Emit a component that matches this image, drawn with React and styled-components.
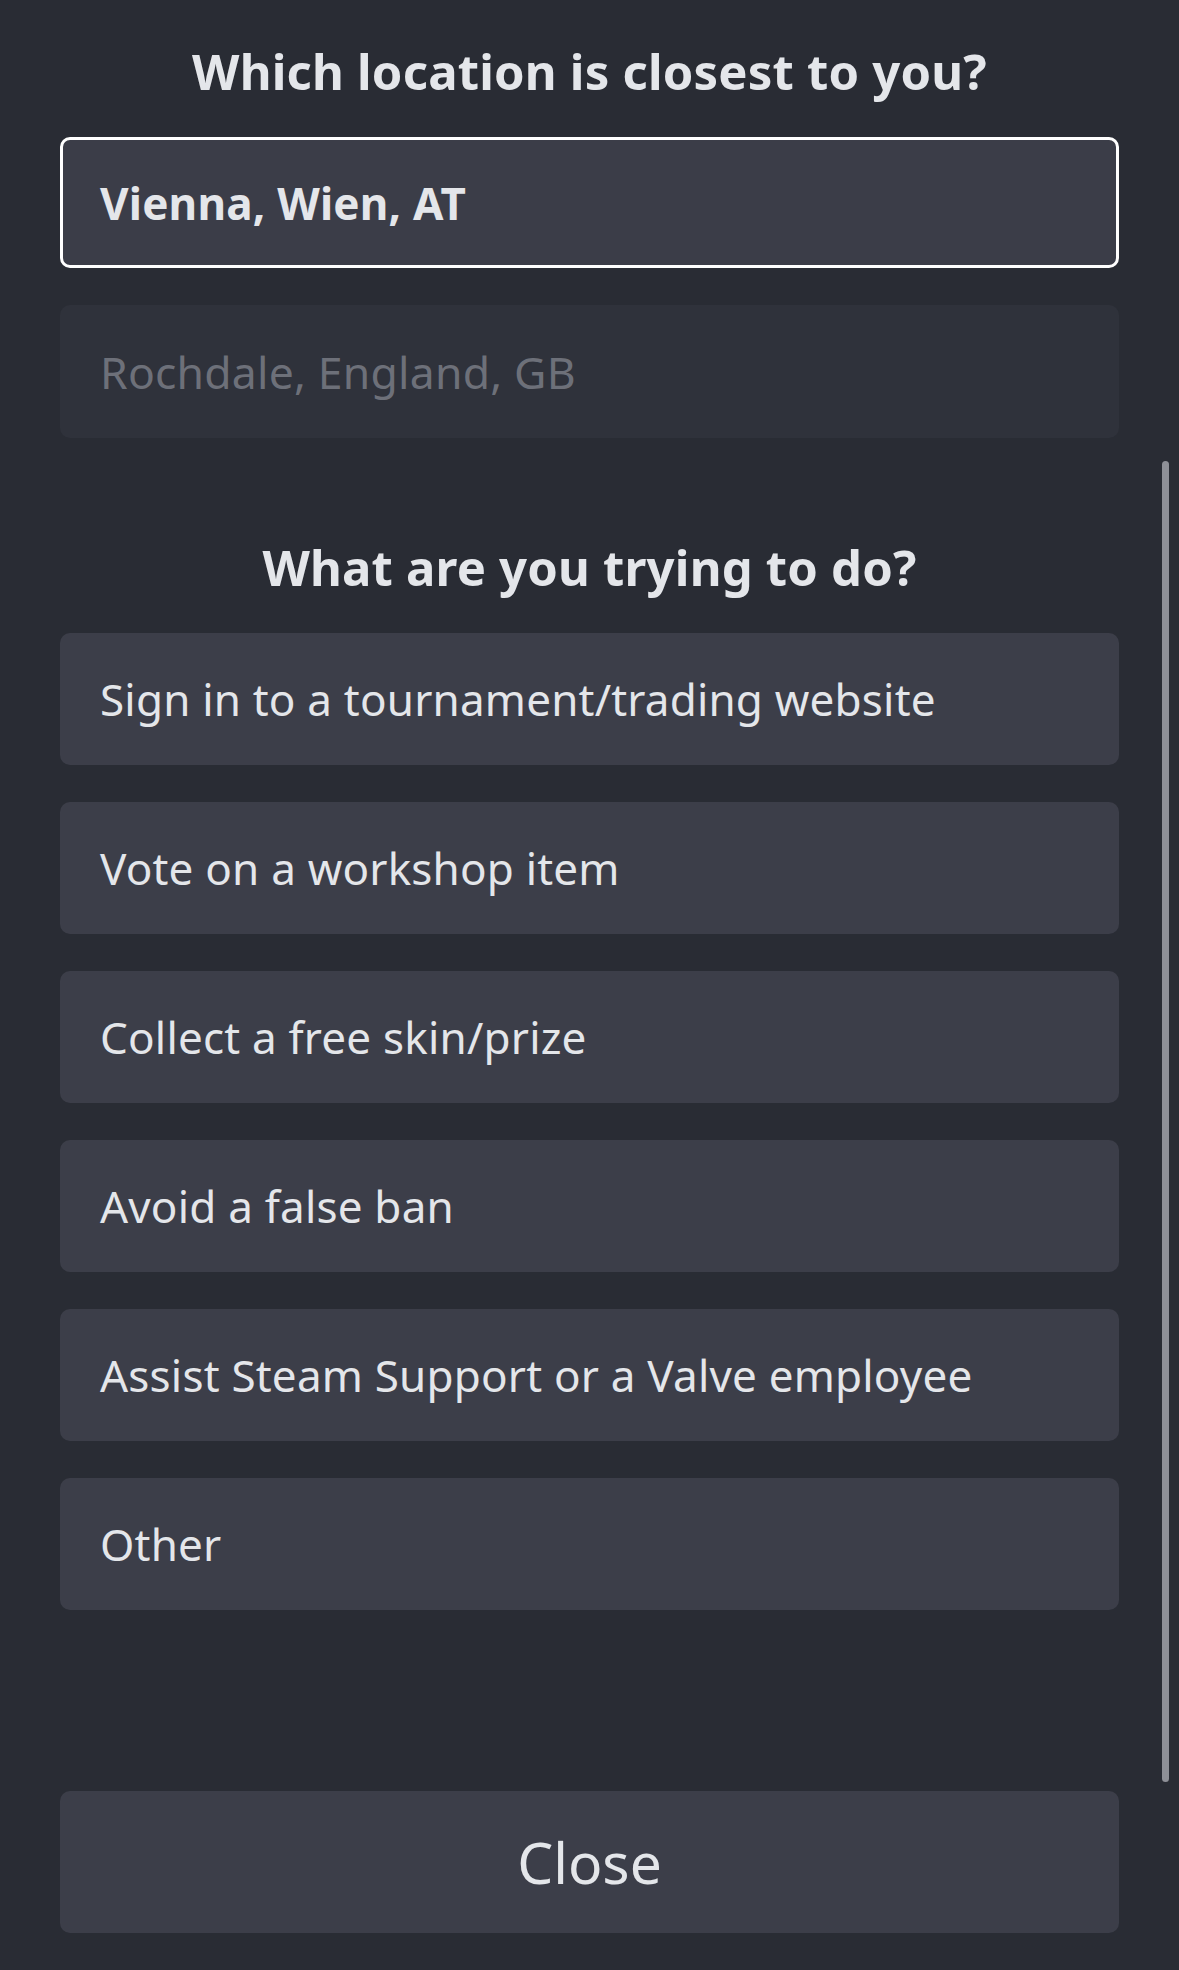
import React from "react";
import styled, { createGlobalStyle } from "styled-components";

const GlobalStyle = createGlobalStyle`
  html, body {
    margin: 0;
    padding: 0;
    background: #292c34;
  }
  body {
    font-family: "Noto Sans", "Open Sans", sans-serif;
    color: #e4e6ea;
  }
`;

const locations = [
  { name: "Vienna, Wien, AT", selected: true },
  { name: "Rochdale, England, GB", selected: false },
];

const reasons = [
  "Sign in to a tournament/trading website",
  "Vote on a workshop item",
  "Collect a free skin/prize",
  "Avoid a false ban",
  "Assist Steam Support or a Valve employee",
  "Other",
];

const App = () => {
  return (
    <>
      <GlobalStyle />
      <Screen>
        <Content>
          <Heading>Which location is closest to you?</Heading>
          <List>
            {locations.map((loc) => (
              <LocationOption key={loc.name} selected={loc.selected}>
                {loc.name}
              </LocationOption>
            ))}
          </List>
          <Heading second>What are you trying to do?</Heading>
          <List>
            {reasons.map((r) => (
              <ReasonOption key={r}>{r}</ReasonOption>
            ))}
          </List>
        </Content>
        <Footer>
          <CloseButton>Close</CloseButton>
        </Footer>
        <ScrollThumb />
      </Screen>
    </>
  );
};

const Screen = styled.div`
  position: relative;
  width: 1179px;
  height: 1970px;
  box-sizing: border-box;
  padding: 0 60px;
  display: flex;
  flex-direction: column;
  background: #292c34;
`;

const Content = styled.div`
  display: flex;
  flex-direction: column;
  padding-top: 43px;
`;

const Heading = styled.h2`
  margin: ${(p) => (p.second ? "101px 0 38px" : "0 0 38px")};
  text-align: center;
  font-size: 49px;
  line-height: 56px;
  font-weight: 700;
  letter-spacing: 0.2px;
  color: #e4e6ea;
`;

const List = styled.div`
  display: flex;
  flex-direction: column;
  gap: 37px;
`;

const Option = styled.div`
  box-sizing: border-box;
  display: flex;
  align-items: center;
  height: 132px;
  padding: 0 38px;
  border-radius: 10px;
  font-size: 44px;
  letter-spacing: 0.2px;
`;

const LocationOption = styled(Option)`
  height: ${(p) => (p.selected ? "131px" : "133px")};
  padding-left: ${(p) => (p.selected ? "37px" : "38px")};
  background: ${(p) => (p.selected ? "#3b3d48" : "#2f323b")};
  border: ${(p) => (p.selected ? "3px" : "2px")} solid
    ${(p) => (p.selected ? "#ffffff" : "transparent")};
  color: ${(p) => (p.selected ? "#e4e6ea" : "#6d7079")};
  font-weight: ${(p) => (p.selected ? 700 : 400)};
  font-size: ${(p) => (p.selected ? "44px" : "44.5px")};
`;

const ReasonOption = styled(Option)`
  background: #3c3e49;
  border: 2px solid transparent;
  color: #e4e6ea;
`;

const Footer = styled.div`
  margin-top: auto;
  padding-bottom: 37px;
`;

const CloseButton = styled.div`
  display: flex;
  align-items: center;
  justify-content: center;
  height: 142px;
  border-radius: 10px;
  background: #3c3e49;
  font-size: 57px;
  color: #e4e6ea;
`;

const ScrollThumb = styled.div`
  position: absolute;
  top: 461px;
  right: 10px;
  width: 7px;
  height: 1321px;
  border-radius: 4px;
  background: #8e9097;
`;

export default App;
